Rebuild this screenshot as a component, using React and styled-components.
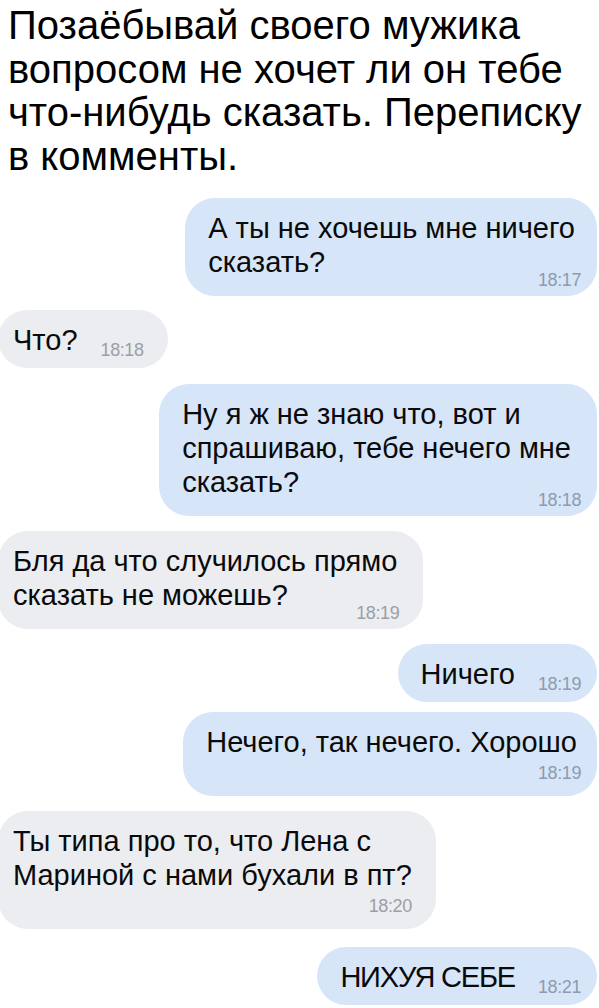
import React from 'react';
import styled, { createGlobalStyle, css } from 'styled-components';

const Global = createGlobalStyle`
  html, body { margin: 0; padding: 0; background: #ffffff; }
  body {
    width: 599px;
    overflow: hidden;
    font-family: "Liberation Sans", Arial, Helvetica, sans-serif;
    -webkit-font-smoothing: antialiased;
  }
`;

const Page = styled.main`
  display: flex;
  flex-direction: column;
  padding-top: 4px;
  box-sizing: border-box;
  min-height: 1008px;
`;

const Caption = styled.h1`
  margin: 0;
  padding: 0 8px;
  font-family: "Liberation Sans", Arial, sans-serif;
  font-weight: 400;
  font-size: 40px;
  line-height: 43.5px;
  color: #000000;
  white-space: nowrap;
`;

const Thread = styled.section`
  display: flex;
  flex-direction: column;
  padding-top: 20px;
`;

const Row = styled.div`
  display: flex;
  justify-content: ${(p) => (p.$out ? 'flex-end' : 'flex-start')};
  margin-top: ${(p) => p.$gap}px;
`;

const Bubble = styled.div`
  display: grid;
  grid-template-columns: auto auto;
  background: ${(p) => (p.$out ? '#d6e5f8' : '#ebedf0')};
  border-radius: 30px;
  padding: ${(p) => (p.$out ? '13px 16px 11px 23px' : '13px 24px 11px 15px')};
  margin: ${(p) => (p.$out ? '0 2px 0 0' : '0 0 0 -2px')};
`;

const Text = styled.div`
  grid-column: 1;
  grid-row: 1;
  font-size: 29px;
  line-height: 34px;
  letter-spacing: ${(p) => p.$track || 0}px;
  color: #0a0a0a;
  white-space: nowrap;
  padding-right: ${(p) => p.$trail || 0}px;
`;

const placements = {
  after: css`
    grid-column: 2;
    grid-row: 1;
    align-self: end;
    margin: 0 0 -3px 23px;
  `,
  overlay: css`
    grid-column: 1;
    grid-row: 2;
    justify-self: end;
    margin: -9px 0 -5px 0;
  `,
  below: css`
    grid-column: 1;
    grid-row: 2;
    justify-self: end;
    margin: 4px 0 2px 0;
  `,
};

const Time = styled.span`
  font-size: 18px;
  line-height: 20px;
  letter-spacing: -0.4px;
  color: ${(p) => (p.$out ? '#8d9bb0' : '#9c9fa5')};
  ${(p) => placements[p.$place]}
`;

const messages = [
  { out: true, gap: 0, lines: ['А ты не хочешь мне ничего', 'сказать?'], time: '18:17', place: 'overlay', trail: 6 },
  { out: false, gap: 14, lines: ['Что?'], time: '18:18', place: 'after' },
  { out: true, gap: 16, lines: ['Ну я ж не знаю что, вот и', 'спрашиваю, тебе нечего мне', 'сказать?'], time: '18:18', place: 'overlay', trail: 10 },
  { out: false, gap: 15, lines: ['Бля да что случилось прямо', 'сказать не можешь?'], time: '18:19', place: 'overlay', trail: 2 },
  { out: true, gap: 15, lines: ['Ничего'], time: '18:19', place: 'after' },
  { out: true, gap: 10, lines: ['Нечего, так нечего. Хорошо'], time: '18:19', place: 'below', trail: 4 },
  { out: false, gap: 15, lines: ['Ты типа про то, что Лена с', 'Мариной с нами бухали в пт?'], time: '18:20', place: 'below' },
  { out: true, gap: 18, lines: ['НИХУЯ СЕБЕ'], time: '18:21', place: 'after', track: -1.2 },
];

export default function App() {
  return (
    <>
      <Global />
      <Page>
        <Caption>
          Позаёбывай своего мужика
          <br />
          вопросом не хочет ли он тебе
          <br />
          что-нибудь сказать. Переписку
          <br />в комменты.
        </Caption>
        <Thread>
          {messages.map((m, i) => (
            <Row key={i} $out={m.out} $gap={m.gap}>
              <Bubble $out={m.out}>
                <Text $trail={m.trail} $track={m.track}>
                  {m.lines.map((l, j) => (
                    <React.Fragment key={j}>
                      {j > 0 && <br />}
                      {l}
                    </React.Fragment>
                  ))}
                </Text>
                <Time $out={m.out} $place={m.place}>
                  {m.time}
                </Time>
              </Bubble>
            </Row>
          ))}
        </Thread>
      </Page>
    </>
  );
}
